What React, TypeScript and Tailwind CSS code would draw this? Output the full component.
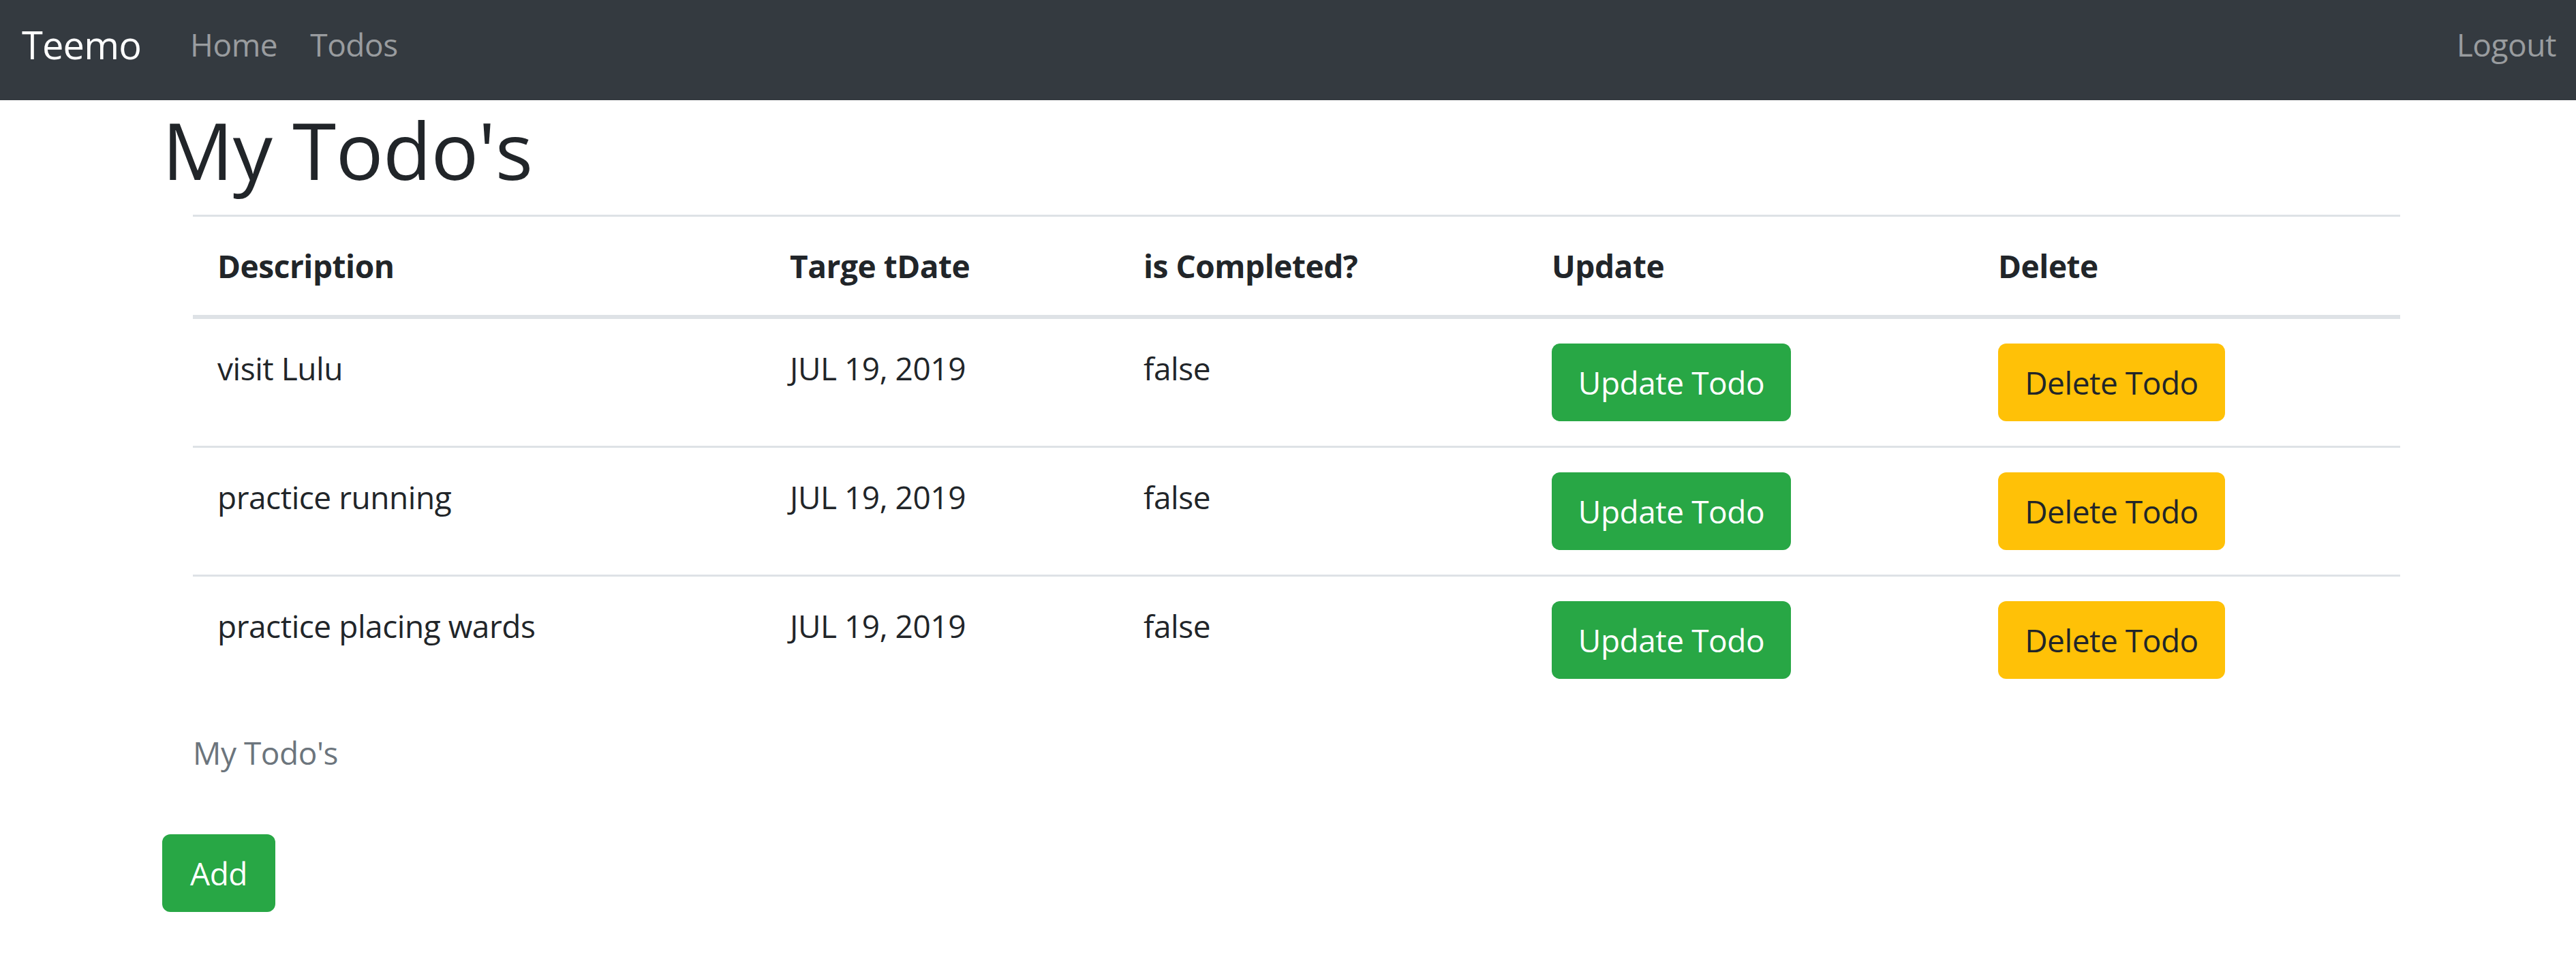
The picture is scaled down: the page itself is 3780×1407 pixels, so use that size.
const todos = [
  { id: 1, description: "visit Lulu", targetDate: "JUL 19, 2019", done: false },
  { id: 2, description: "practice running", targetDate: "JUL 19, 2019", done: false },
  { id: 3, description: "practice placing wards", targetDate: "JUL 19, 2019", done: false },
];

const th = "border-t-[3px] border-b-[6px] border-[#dee2e6] p-[36px] text-left align-bottom font-bold";
const td = "border-t-[3px] border-[#dee2e6] p-[36px] align-top";
const btn = "rounded-[12px] border-[3px] border-transparent py-[18px] text-center leading-[72px]";

const App = () => {
  return (
    <div className="min-h-screen bg-white font-['Open_Sans',sans-serif] text-[46px] leading-[72px] tracking-[-0.01em] text-[#212529]">
      <nav className="flex h-[147px] items-center bg-[#343a40] pb-[18px] pl-[32px] pr-[5px]">
        <a href="#" className="mr-[48px] text-[56px] leading-none tracking-[-0.015em] text-white">
          Teemo
        </a>
        <ul className="flex">
          <li>
            <a href="#" className="px-[24px] leading-none text-white/50">
              Home
            </a>
          </li>
          <li>
            <a href="#" className="px-[24px] leading-none text-white/50">
              Todos
            </a>
          </li>
        </ul>
        <ul className="ml-auto flex">
          <li>
            <a href="#" className="px-[24px] leading-none text-white/50">
              Logout
            </a>
          </li>
        </ul>
      </nav>

      <div className="pl-[238px] pr-[238px]">
        <h1 className="mb-[24px] text-[116px] font-medium leading-[144px]">My Todo's</h1>

        <table className="mb-[48px] ml-[45px] w-[3239px] table-fixed border-collapse">
          <caption className="caption-bottom py-[36px] text-left text-[#6c757d]">My Todo's</caption>
          <thead>
            <tr>
              <th className={`${th} w-[840px]`}>Description</th>
              <th className={`${th} w-[519px]`}>Targe tDate</th>
              <th className={`${th} w-[599px]`}>is Completed?</th>
              <th className={`${th} w-[655px]`}>Update</th>
              <th className={`${th} w-[626px]`}>Delete</th>
            </tr>
          </thead>
          <tbody>
            {todos.map((todo) => (
              <tr key={todo.id}>
                <td className={td}>{todo.description}</td>
                <td className={td}>{todo.targetDate}</td>
                <td className={td}>{todo.done.toString()}</td>
                <td className={td}>
                  <button className={`${btn} w-[351px] bg-[#28a745] text-white`}>Update Todo</button>
                </td>
                <td className={td}>
                  <button className={`${btn} w-[333px] bg-[#ffc107] text-[#212529]`}>Delete Todo</button>
                </td>
              </tr>
            ))}
          </tbody>
        </table>

        <div>
          <button className={`${btn} w-[166px] bg-[#28a745] text-white`}>Add</button>
        </div>
      </div>
    </div>
  );
};

export default App;
